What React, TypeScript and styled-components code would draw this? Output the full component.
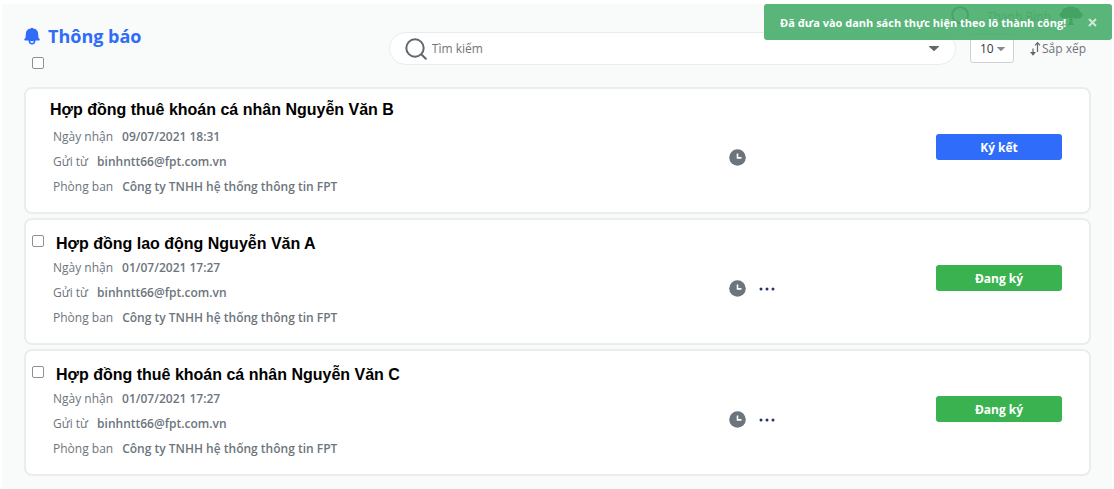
import React from 'react';
import styled, { createGlobalStyle } from 'styled-components';

const GlobalStyle = createGlobalStyle`
  * { box-sizing: border-box; }
  body {
    margin: 0;
    background: #fff;
    font-family: "Open Sans", sans-serif;
    font-size: 12px;
    color: #6c757d;
  }
  button, input, select { font: inherit; color: inherit; }
`;

const Page = styled.div`
  position: relative;
  margin: 4px 2px 0;
  min-height: calc(100vh - 4px);
  padding: 0 21px 13px 22px;
  background: #f9fbfa;
`;

const UserBar = styled.div`
  display: flex;
  justify-content: flex-end;
  align-items: center;
  gap: 16px;
  height: 24px;
  padding-right: 8px;
`;

const UserGroup = styled.div`
  display: flex;
  align-items: center;
  gap: 8px;
`;

const Header = styled.header`
  display: flex;
  align-items: flex-start;
  margin-bottom: 18px;
`;

const Heading = styled.div`
  flex: 1 1 0;
  margin-top: -8px;
`;

const Title = styled.h1`
  display: flex;
  align-items: center;
  gap: 8px;
  margin: 0;
  font-size: 18px;
  line-height: 32px;
  font-weight: 700;
  color: #2e6cf9;
`;

const Check = styled.input`
  appearance: none;
  display: block;
  width: 12px;
  height: 12px;
  margin: 0;
  border: 1px solid #909090;
  border-radius: 2px;
  background: #fff;
  &:checked { background: #2e6cf9; }
`;

const SelectAll = styled.div`
  padding: 5px 0 0 8px;
`;

const Tools = styled.div`
  flex: 0 0 66%;
  display: flex;
  align-items: center;
  gap: 14px;
  margin-top: 4px;
  padding: 0 5px 0 2px;
`;

const SearchBox = styled.label`
  flex: 1;
  display: flex;
  align-items: center;
  gap: 5px;
  height: 33px;
  padding: 0 16px 0 15px;
  border: 1px solid #e9ecec;
  border-radius: 17px;
  background: #fff;
`;

const SearchInput = styled.input`
  flex: 1;
  min-width: 0;
  padding: 0;
  border: 0;
  outline: 0;
  background: transparent;
  &::placeholder { color: #757575; opacity: 1; }
`;

const SelectWrap = styled.div`
  display: flex;
  align-items: center;
  position: relative;
  height: 29px;
  svg { position: absolute; right: 9px; pointer-events: none; }
`;

const PageSize = styled.select`
  appearance: none;
  width: 44px;
  height: 29px;
  padding: 0 0 0 9px;
  border: 1px solid #ced0d1;
  border-radius: 3px;
  background: #fff;
  color: #343a40;
`;

const SortButton = styled.button`
  display: flex;
  align-items: center;
  gap: 1px;
  margin-left: 2px;
  padding: 0;
  border: 0;
  background: transparent;
  white-space: nowrap;
`;

const List = styled.main`
  display: flex;
  flex-direction: column;
  gap: 4px;
`;

const Card = styled.article`
  display: flex;
  min-height: 127px;
  padding: 0 27px 0 6px;
  border: 2px solid #ebeded;
  border-radius: 8px;
  background: #fff;
`;

const Info = styled.div`
  flex: 1;
  min-width: 0;
`;

const CardHead = styled.div<{ $selectable: boolean }>`
  display: flex;
  align-items: flex-start;
  gap: 12px;
  height: 35px;
  padding: ${p => (p.$selectable ? '15px 0 0' : '12px 0 0 18px')};
`;

const CardTitle = styled.label`
  font-family: "Liberation Sans", Arial, sans-serif;
  font-size: 16px;
  line-height: 18px;
  font-weight: 700;
  color: #000;
`;

const Fields = styled.dl`
  margin: 0;
  padding-left: 21px;
`;

const Field = styled.div`
  display: flex;
  gap: 9px;
  line-height: 25px;
`;

const Term = styled.dt``;

const Value = styled.dd`
  margin: 0;
  font-weight: 600;
`;

const Status = styled.div`
  display: flex;
  align-items: flex-start;
  gap: 13px;
  width: 207px;
  padding-top: 60px;
`;

const IconButton = styled.button`
  display: flex;
  align-items: center;
  height: 17px;
  padding: 0;
  border: 0;
  background: transparent;
`;

const Action = styled.button<{ $tone: 'blue' | 'green' }>`
  width: 126px;
  height: 26px;
  margin-top: 45px;
  padding: 0;
  border: 0;
  border-radius: 3px;
  font-weight: 700;
  color: #fff;
  background: ${p => (p.$tone === 'blue' ? '#2e6cf9' : '#3ab250')};
`;

const Toast = styled.div`
  position: absolute;
  top: 0;
  right: 0;
  display: flex;
  align-items: center;
  justify-content: space-between;
  width: 348px;
  height: 36px;
  padding: 0 15px 0 16px;
  border-radius: 3px;
  background: rgba(72, 174, 108, 0.91);
  color: #fff;
  font-size: 11px;
  font-weight: 700;
  white-space: nowrap;
`;

const Bell = () => (
  <svg width="16" height="18" viewBox="0 0 16 18" aria-hidden="true">
    <path fill="#2e6cf9" d="M8 .8c.6 0 1 .3 1.200.7 3.200.4 5 2.500 5 5.500 0 2.800.3 4 1.300 5 .6.700.2 1.600-.7 1.600H1.200c-.9 0-1.300-.9-.7-1.600 1-1 1.300-2.200 1.300-5 0-3 1.800-5.100 5-5.500C7 1.100 7.400.8 8 .8Z" />
    <path fill="#fff" stroke="#2e6cf9" strokeWidth="1.500" d="M5.300 13.500c0 4.400 5.400 4.400 5.400 0Z" />
  </svg>
);

const Magnifier = ({ size, color }: { size: number; color: string }) => (
  <svg width={size} height={size} viewBox="0 0 22 22" aria-hidden="true">
    <g fill="none" stroke={color} strokeWidth="2" strokeLinecap="round">
      <circle cx="10" cy="10" r="8.700" />
      <path d="m16.500 16.500 4.300 4.300" />
    </g>
  </svg>
);

const Caret = ({ width, color }: { width: number; color: string }) => (
  <svg width={width} height={width / 2} viewBox="0 0 10 5" aria-hidden="true">
    <path fill={color} d="M.5 0h9c.5 0 .6.400.3.700L5.600 4.700a.9.9 0 0 1-1.200 0L.2.700C-.1.400 0 0 .5 0Z" />
  </svg>
);

const SortArrows = () => (
  <svg width="11" height="16" viewBox="0 0 11 16" aria-hidden="true">
    <g fill="none" stroke="#5f676e" strokeWidth="1.200">
      <path d="M7.500 11V2M5 4.300 7.500 1.700 10 4.300M3 7.500V12" />
      <path fill="#5f676e" stroke="none" d="M0 11h6l-3 3.700Z" />
    </g>
  </svg>
);

const Clock = () => (
  <svg width="17" height="17" viewBox="0 0 17 17" aria-hidden="true">
    <circle cx="8.500" cy="8.500" r="8.300" fill="#6c757d" />
    <path fill="none" stroke="#fff" strokeWidth="1.600" d="M8.500 4.500v4.400h4" />
  </svg>
);

const Dots = () => (
  <svg width="16" height="4" viewBox="0 0 16 4" aria-hidden="true">
    <g fill="#24346a">
      <circle cx="2" cy="2" r="1.500" /><circle cx="8" cy="2" r="1.500" /><circle cx="14" cy="2" r="1.500" />
    </g>
  </svg>
);

const Tree = () => (
  <svg width="24" height="20" viewBox="0 0 24 20" aria-hidden="true">
    <path fill="#003d12" d="M7 2c1-2 8-2 10 0 3 0 4 2 3.500 3.500C24 6 25 11 21 12c-2 1-5 1-7.500-.5V17l2 2h-7l2-2v-5.500C8 13 4 13 2.500 11.500-.5 10 0 7 3 6 2.500 4 4 2 7 2Z" />
  </svg>
);

const Close = () => (
  <svg width="9" height="9" viewBox="0 0 9 9" aria-hidden="true">
    <path fill="none" stroke="#cfe9d7" strokeWidth="2" d="m1 1 7 7M8 1 1 8" />
  </svg>
);

type Notice = { id: string; title: string; date: string; selectable: boolean; tone: 'blue' | 'green'; action: string };

const notices: Notice[] = [
  { id: 'b', title: 'Hợp đồng thuê khoán cá nhân Nguyễn Văn B', date: '09/07/2021 18:31', selectable: false, tone: 'blue', action: 'Ký kết' },
  { id: 'a', title: 'Hợp đồng lao động Nguyễn Văn A', date: '01/07/2021 17:27', selectable: true, tone: 'green', action: 'Đang ký' },
  { id: 'c', title: 'Hợp đồng thuê khoán cá nhân Nguyễn Văn C', date: '01/07/2021 17:27', selectable: true, tone: 'green', action: 'Đang ký' },
];

const NoticeCard = ({ notice }: { notice: Notice }) => (
  <Card>
    <Info>
      <CardHead $selectable={notice.selectable}>
        {notice.selectable && <Check type="checkbox" id={notice.id} />}
        <CardTitle as={notice.selectable ? 'label' : 'span'} htmlFor={notice.selectable ? notice.id : undefined}>
          {notice.title}
        </CardTitle>
      </CardHead>
      <Fields>
        <Field><Term>Ngày nhận</Term><Value>{notice.date}</Value></Field>
        <Field><Term>Gửi từ</Term><Value>binhntt66@fpt.com.vn</Value></Field>
        <Field><Term>Phòng ban</Term><Value>Công ty TNHH hệ thống thông tin FPT</Value></Field>
      </Fields>
    </Info>
    <Status>
      <IconButton aria-label="Lịch sử"><Clock /></IconButton>
      {notice.selectable && <IconButton aria-label="Thêm"><Dots /></IconButton>}
    </Status>
    <Action $tone={notice.tone}>{notice.action}</Action>
  </Card>
);

export default function App() {
  return (
    <>
      <GlobalStyle />
      <Page>
        <UserBar>
          <Magnifier size={20} color="#2f3a40" />
          <UserGroup><span>Thanh Bình</span><Tree /></UserGroup>
        </UserBar>
        <Header>
          <Heading>
            <Title><Bell />Thông báo</Title>
            <SelectAll><Check type="checkbox" aria-label="Chọn tất cả" /></SelectAll>
          </Heading>
          <Tools>
            <SearchBox>
              <Magnifier size={22} color="#5f6870" />
              <SearchInput type="text" placeholder="Tìm kiếm" aria-label="Tìm kiếm" />
              <Caret width={10} color="#5f6870" />
            </SearchBox>
            <SelectWrap>
              <PageSize aria-label="Số dòng" defaultValue="10"><option>10</option><option>20</option></PageSize>
              <Caret width={8} color="#85898d" />
            </SelectWrap>
            <SortButton><SortArrows />Sắp xếp</SortButton>
          </Tools>
        </Header>
        <List>
          {notices.map(n => <NoticeCard key={n.id} notice={n} />)}
        </List>
        <Toast role="status">
          <span>Đã đưa vào danh sách thực hiện theo lô thành công!</span>
          <IconButton aria-label="Đóng"><Close /></IconButton>
        </Toast>
      </Page>
    </>
  );
}
